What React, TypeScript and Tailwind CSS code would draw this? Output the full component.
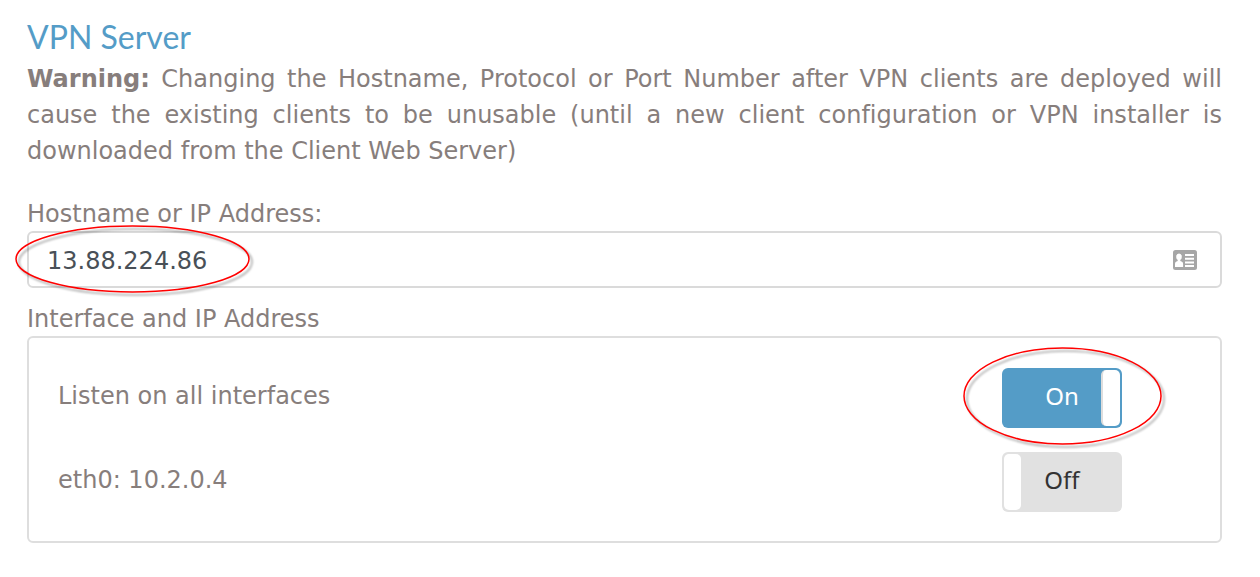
import { useState } from "react";

function Highlight({ className }: { className: string }) {
  return (
    <svg
      aria-hidden="true"
      className={`pointer-events-none absolute overflow-visible drop-shadow-[3px_3px_1px_rgba(0,0,0,0.35)] ${className}`}
    >
      <ellipse cx="50%" cy="50%" rx="50%" ry="50%" fill="none" stroke="#ff0000" strokeWidth="1.5" />
    </svg>
  );
}

function ContactCardIcon() {
  return (
    <svg aria-hidden="true" viewBox="0 0 24 20" className="h-5 w-6 shrink-0">
      <rect width="24" height="20" rx="2.5" fill="#a6a6a6" />
      <ellipse cx="6" cy="6.8" rx="2.8" ry="3.3" fill="#fff" />
      <path d="M4.700 9h2.600v2c1.800.6 2.800 1.200 2.800 3v3H2v-3c0-1.800 1-2.400 2.700-3z" fill="#fff" />
      <path d="M12 5h9M12 8.700h9M12 12.400h9M12 16.100h9" stroke="#fff" strokeWidth="2" />
    </svg>
  );
}

type SwitchProps = {
  labelId: string;
  on: boolean;
  onToggle: () => void;
};

function Switch({ labelId, on, onToggle }: SwitchProps) {
  return (
    <button
      type="button"
      role="switch"
      aria-checked={on}
      aria-labelledby={labelId}
      onClick={onToggle}
      className={`grid h-[60px] w-[120px] items-center rounded-md p-0.5 ${
        on
          ? "grid-cols-[19px_1fr_19px] bg-[#549cc7] text-white"
          : "grid-cols-[17px_1fr_17px] bg-[#e1e1e1] text-[#333333]"
      }`}
    >
      <span className={`h-full rounded-[5px] ${on ? "" : "bg-white"}`} />
      <span className="pb-1 text-center font-['Noto_Sans',sans-serif]">{on ? "On" : "Off"}</span>
      <span className={`h-full rounded-[5px] ${on ? "border-l-2 border-[#dddddd] bg-white" : ""}`} />
    </button>
  );
}

export default function App() {
  const [listenAll, setListenAll] = useState(true);
  const [eth0, setEth0] = useState(false);

  return (
    <main className="bg-white pt-3 pr-[38px] pb-8 pl-[27px] font-['DejaVu_Sans',Verdana,sans-serif] text-2xl leading-9 text-[#877e7c] [font-variant-ligatures:none]">
      <h1 className="font-[Lato,sans-serif] text-[32px] leading-[49px] text-[#549cc7]">VPN Server</h1>
      <p className="text-justify">
        <strong>Warning:</strong> Changing the Hostname, Protocol or Port Number after VPN clients are
        deployed will cause the existing clients to be unusable (until a new client configuration or VPN
        installer is downloaded from the Client Web Server)
      </p>

      <label htmlFor="hostname" className="mt-7 block leading-[34px]">
        Hostname or IP Address:
      </label>
      <div className="relative flex h-[57px] items-center rounded-md border-2 border-[#dadada] pr-[23px] pl-[18px]">
        <input
          id="hostname"
          type="text"
          defaultValue="13.88.224.86"
          className="min-w-0 flex-1 bg-transparent pt-0.5 text-[#495057] outline-none"
        />
        <ContactCardIcon />
        <Highlight className="-top-[7px] -left-[13px] h-[66px] w-[233px]" />
      </div>

      <h2 id="interfaces" className="mt-3.5 leading-[34px]">
        Interface and IP Address
      </h2>
      <section
        aria-labelledby="interfaces"
        className="flex flex-col gap-6 rounded-md border-2 border-[#dedede] pt-[30px] pr-[98px] pb-[29px] pl-[29px]"
      >
        <div className="flex items-center justify-between">
          <span id="listen-all" className="pb-1">
            Listen on all interfaces
          </span>
          <div className="relative">
            <Switch labelId="listen-all" on={listenAll} onToggle={() => setListenAll(!listenAll)} />
            <Highlight className="-top-5 -left-[38px] h-24 w-[197px]" />
          </div>
        </div>
        <div className="flex items-center justify-between">
          <span id="eth0" className="pb-1">
            eth0: 10.2.0.4
          </span>
          <Switch labelId="eth0" on={eth0} onToggle={() => setEth0(!eth0)} />
        </div>
      </section>
    </main>
  );
}
